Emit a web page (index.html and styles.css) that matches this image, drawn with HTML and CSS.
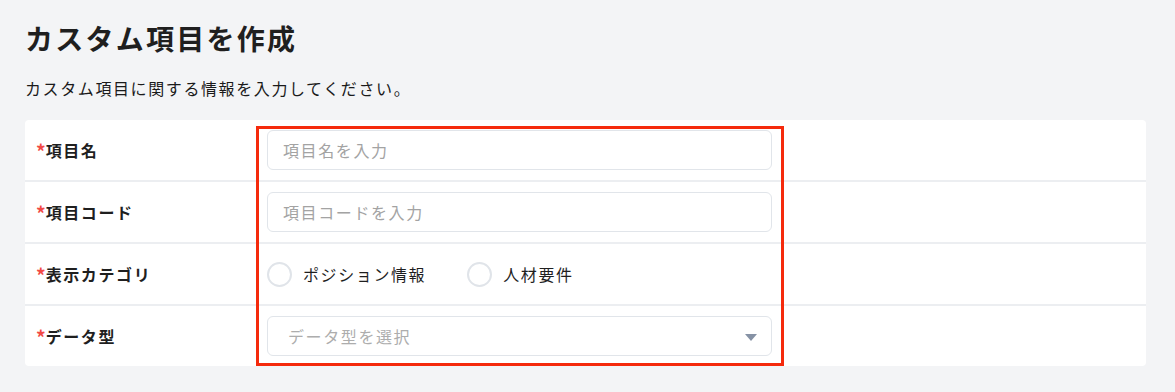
FILE: index.html
```html
<!DOCTYPE html>
<html lang="ja">
<head>
<meta charset="utf-8">
<link rel="stylesheet" href="styles.css">
</head>
<body>
<div class="page">
  <h1 class="title">カスタム項目を作成</h1>
  <p class="subtitle">カスタム項目に関する情報を入力してください。</p>
  <div class="card">
    <div class="row">
      <div class="label"><span class="req">*</span>項目名</div>
      <div class="field"><div class="input placeholder">項目名を入力</div></div>
    </div>
    <div class="row">
      <div class="label"><span class="req">*</span>項目コード</div>
      <div class="field"><div class="input placeholder">項目コードを入力</div></div>
    </div>
    <div class="row">
      <div class="label"><span class="req">*</span>表示カテゴリ</div>
      <div class="field radios">
        <label class="radio"><span class="circle"></span><span class="rtext">ポジション情報</span></label>
        <label class="radio"><span class="circle"></span><span class="rtext">人材要件</span></label>
      </div>
    </div>
    <div class="row last">
      <div class="label"><span class="req">*</span>データ型</div>
      <div class="field"><div class="input select"><span class="placeholder sel-ph">データ型を選択</span><span class="caret"></span></div></div>
    </div>
    <div class="highlight"></div>
  </div>
</div>
</body>
</html>
```

FILE: styles.css
```css
* { box-sizing: border-box; }
html, body { margin: 0; padding: 0; }
body {
  background: #f3f4f6;
  font-family: "Noto Sans CJK JP", "Noto Sans", sans-serif;
  color: #222;
  width: 1175px;
  height: 392px;
  overflow: hidden;
}
.page {
  padding: 18px 29px 0 25px;
}
.title {
  margin: 0;
  font-size: 28px;
  line-height: 40px;
  font-weight: 700;
  letter-spacing: 0.08em;
  color: #1f1f1f;
}
.subtitle {
  margin: 18px 0 0;
  font-size: 16px;
  line-height: 24px;
  letter-spacing: 0.1em;
  color: #1a1a1a;
}
.card {
  position: relative;
  margin-top: 20px;
  background: #fff;
  border-radius: 4px;
}
.row {
  display: grid;
  grid-template-columns: 242px 505px;
  align-items: center;
  height: 62px;
  border-bottom: 2px solid #eceef1;
}
.row.last { height: 60px; border-bottom: none; }
.label {
  padding-left: 11px;
  font-size: 16px;
  font-weight: 700;
  letter-spacing: 0.1em;
  color: #1f1f1f;
  display: flex;
  align-items: center;
}
.req {
  color: #f24a45;
  font-size: 19px;
  line-height: 1;
  font-weight: 700;
  letter-spacing: 0;
  margin-right: 0;
  position: relative;
  top: 0;
}
.input {
  height: 40px;
  border: 1px solid #e1e5ea;
  border-radius: 6px;
  padding: 0 15px;
  display: flex;
  align-items: center;
  font-size: 16px;
  letter-spacing: 0.1em;
}
.placeholder { color: #a3a3a3; }
.select { padding-left: 20px; padding-right: 14px; justify-content: space-between; }
.sel-ph { color: #adadad; }
.caret {
  width: 0; height: 0;
  border-left: 6px solid transparent;
  border-right: 6px solid transparent;
  border-top: 7px solid #8692a5;
  margin-top: 2px;
}
.radios { display: flex; align-items: center; gap: 41px; }
.radio { display: flex; align-items: center; gap: 11px; }
.circle {
  width: 25px; height: 25px;
  border: 2px solid #e0e4e9;
  border-radius: 50%;
  background: #fff;
}
.rtext { font-size: 16px; letter-spacing: 0.1em; color: #1f1f1f; }
.highlight {
  position: absolute;
  left: 231px;
  top: 6px;
  width: 528px;
  height: 240px;
  border: 3px solid #f52a0c;
  pointer-events: none;
}
```
